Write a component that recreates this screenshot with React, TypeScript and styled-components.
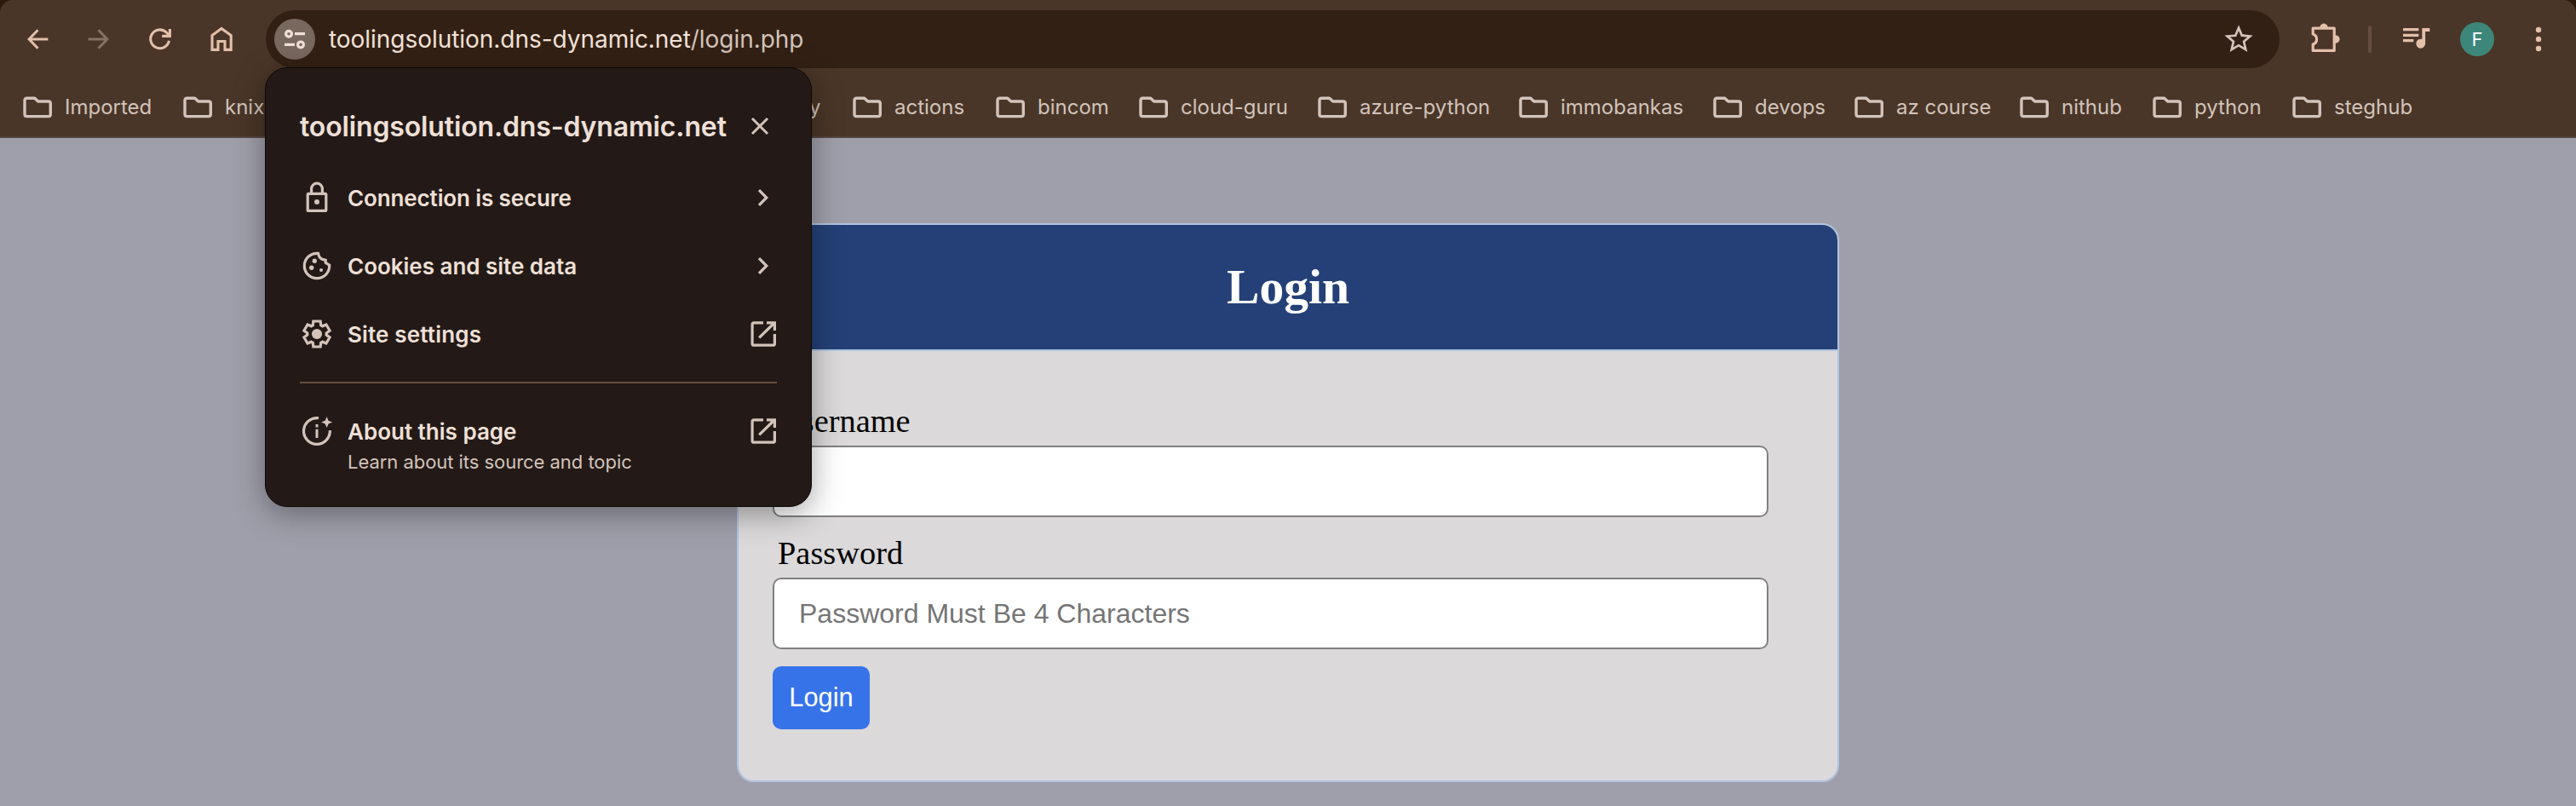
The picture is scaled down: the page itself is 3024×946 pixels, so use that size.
import React from 'react';
import styled, { createGlobalStyle } from 'styled-components';

const ui = `Inter, "Liberation Sans", sans-serif`;

const GlobalStyle = createGlobalStyle`
  *, *::before, *::after { box-sizing: border-box; }
  body { margin: 0; background: #9f9fab; overflow: hidden; }
  h1, h2, p { margin: 0; }
  button { border: 0; padding: 0; background: none; color: inherit; font: inherit; }
  svg { display: block; flex: none; }
`;

const Window = styled.div`
  display: flex;
  flex-direction: column;
  height: 946px;
`;

/* Browser chrome */

const ChromeFrame = styled.header`
  background: #2b190e;
  flex: none;
`;

const Chrome = styled.div`
  height: 162px;
  background: #4a3628;
  border-bottom: 2px solid #57453c;
  border-radius: 15px 15px 0 0;
  font-family: ${ui};
`;

const Toolbar = styled.div`
  display: flex;
  align-items: center;
  height: 92px;
  padding: 0 24px 0 8px;
  color: #e2c0aa;
`;

const NavButton = styled.button<{ $muted?: boolean }>`
  display: grid;
  place-items: center;
  width: 72px;
  height: 72px;
  color: ${(p) => (p.$muted ? '#867163' : '#e2c0aa')};
`;

const Omnibox = styled.div`
  display: flex;
  align-items: center;
  gap: 16px;
  flex: 1;
  height: 68px;
  margin-left: 16px;
  padding: 0 28px 0 10px;
  border-radius: 34px;
  background: #332014;
  color: #d2c3bb;
`;

const SiteChip = styled.button`
  width: 48px;
  height: 48px;
  border-radius: 50%;
  background: #79685e;
  color: #efe0d7;
`;

const Url = styled.div`
  flex: 1;
  font-size: 28px;
  letter-spacing: -0.04px;
  white-space: nowrap;
  color: #d2c3bb;
`;

const Host = styled.span`
  color: #f1e2d9;
`;

const Actions = styled.div`
  display: flex;
  align-items: center;
  gap: 32px;
  margin-left: 32px;
`;

const Separator = styled.span`
  width: 4px;
  height: 32px;
  border-radius: 2px;
  background: #674d40;
`;

const Avatar = styled.span`
  display: grid;
  place-items: center;
  width: 40px;
  height: 40px;
  border-radius: 50%;
  background: #3c877a;
  color: #fff;
  font-size: 22px;
`;

const Bookmarks = styled.nav`
  display: flex;
  align-items: center;
  height: 68px;
  padding-left: 27px;
  color: #d2c3bb;
`;

const Bookmark = styled.div<{ $width: number }>`
  display: flex;
  align-items: center;
  gap: 15px;
  flex: none;
  width: ${(p) => p.$width}px;
  font-size: 24px;
  white-space: nowrap;
`;

const BookmarkName = styled.span`
  padding-bottom: 2px;
`;

/* Site information popup */

const Popup = styled.aside`
  position: absolute;
  left: 311px;
  top: 79px;
  width: 642px;
  height: 516px;
  padding: 32px 40px 0 40px;
  border: 1px solid #0d0908;
  border-radius: 26px;
  background: #231a17;
  box-shadow: 0 8px 36px rgba(0, 0, 0, 0.36);
  color: #efe0d7;
  font-family: ${ui};
`;

const PopupHead = styled.div`
  display: flex;
  align-items: center;
  justify-content: space-between;
  height: 72px;
  margin-bottom: 8px;
`;

const PopupTitle = styled.h2`
  font-size: 32px;
  font-weight: 600;
  letter-spacing: -0.14px;
  white-space: nowrap;
`;

const CloseButton = styled.button`
  color: #d2c3bb;
`;

const PopupRow = styled.div`
  display: flex;
  align-items: center;
  gap: 16px;
  height: 80px;
  color: #d2c3bb;
`;

const AboutRow = styled(PopupRow)`
  align-items: flex-start;
  margin-top: 38px;
`;

const IconSlot = styled.span`
  display: flex;
  align-items: center;
  height: 36px;
`;

const RowText = styled.div`
  flex: 1;
  padding-top: 1px;
  white-space: nowrap;
`;

const RowLabel = styled.p<{ $spacing?: number }>`
  font-size: 26px;
  font-weight: 600;
  line-height: 36px;
  letter-spacing: ${(p) => p.$spacing ?? 0}px;
  color: #efe0d7;
`;

const RowNote = styled.p`
  font-size: 22px;
  line-height: 35px;
  letter-spacing: -0.04px;
`;

const Divider = styled.hr`
  height: 2px;
  margin: 16px 0 0;
  border: 0;
  background: #674d40;
`;

/* Login page */

const Page = styled.main`
  display: flex;
  flex: 1;
  justify-content: center;
  align-items: flex-start;
  padding-top: 100px;
  background: #9f9fab;
`;

const Card = styled.form`
  width: 1294px;
  height: 656px;
  border: 2px solid #b0c4de;
  border-radius: 20px;
  background: #dbd9da;
  overflow: hidden;
`;

const CardHeader = styled.div`
  display: grid;
  place-items: center;
  height: 148px;
  padding-bottom: 2px;
  border-bottom: 2px solid #b0c4de;
  background: #244077;
`;

const CardTitle = styled.h1`
  font: bold 57.6px "Liberation Serif", serif;
  color: #fff;
`;

const CardBody = styled.div`
  display: flex;
  flex-direction: column;
  align-items: flex-start;
  padding: 40px;
`;

const Label = styled.label`
  margin: 20px 0 7px 6px;
  font: 38.4px/44px "Liberation Serif", serif;
  color: #000;
`;

const Input = styled.input`
  width: 1169px;
  height: 84px;
  padding: 0 29px;
  border: 2px solid #808080;
  border-radius: 10px;
  background: #fff;
  font: 32px "Liberation Sans", sans-serif;
  &::placeholder { color: #757575; opacity: 1; }
`;

const Submit = styled.button`
  width: 114px;
  height: 74px;
  margin-top: 20px;
  border-radius: 10px;
  background: #3673e9;
  color: #fff;
  font: 30.8px "Liberation Sans", sans-serif;
`;

/* Icons */

type IconProps = { size?: number; children: React.ReactNode };

const LineIcon = ({ size = 40, children }: IconProps) => (
  <svg width={size} height={size} viewBox={`0 0 ${size} ${size}`} fill="none" stroke="currentColor" strokeWidth="3.2">
    {children}
  </svg>
);

const BackIcon = () => (
  <LineIcon><path strokeWidth="3" d="M32.4 20H10.5M20.5 9.3L10.1 20l10.4 10.7" /></LineIcon>
);
const ForwardIcon = () => (
  <LineIcon><path strokeWidth="3" d="M7.6 20h21.9M19.5 9.3L29.9 20l-10.4 10.7" /></LineIcon>
);
const ReloadIcon = () => (
  <LineIcon><path strokeWidth="3.1" d="M30.4 21.7A10.9 10.9 0 1 1 27.3 12L31 15.8M31.4 8v8.4h-9.2" /></LineIcon>
);
const HomeIcon = () => (
  <LineIcon><path strokeWidth="3.1" d="M9 32.4V15.6L20 7.4l11.2 8.2v16.8H24v-9.9h-8v9.9z" /></LineIcon>
);
const TuneIcon = () => (
  <LineIcon size={48}>
    <circle cx="17" cy="17.7" r="3.4" />
    <circle cx="31" cy="30.4" r="3.4" />
    <path d="M24 17.6h12M12 30.4h12" />
  </LineIcon>
);
const StarIcon = () => (
  <svg width="40" height="40" viewBox="0 0 24 24" fill="currentColor">
    <path d="M22 9.24l-7.19-.62L12 2 9.19 8.63 2 9.24l5.46 4.73L5.82 21 12 17.27 18.18 21l-1.63-7.03L22 9.24zM12 15.4l-3.76 2.27 1-4.28-3.32-2.88 4.38-.38L12 6.1l1.71 4.04 4.38.38-3.32 2.88 1 4.28L12 15.4z" />
  </svg>
);
const PuzzleIcon = () => (
  <LineIcon>
    <path strokeLinejoin="round" d="M7.2 7.2h25v26.2h-25V26a6.3 6.3 0 0 0 0-12z" />
    <path stroke="none" fill="currentColor" d="M15.2 7a4.8 5.6 0 0 1 9.6 0zM33 15.2a5.6 4.8 0 0 1 0 9.6z" />
  </LineIcon>
);
const QueueIcon = () => (
  <LineIcon>
    <path d="M5 8.6h18.3M5 15.3h18.3M5 21.6h12.3" />
    <path fill="currentColor" stroke="none" d="M27.3 7h9v4h-5.2v14.3a5.4 5.4 0 1 1-3.8-5.2z" />
  </LineIcon>
);
const MenuIcon = () => (
  <LineIcon>
    <g fill="currentColor" stroke="none">
      <circle cx="20" cy="9" r="3.2" />
      <circle cx="20" cy="20" r="3.2" />
      <circle cx="20" cy="31" r="3.2" />
    </g>
  </LineIcon>
);
const FolderIcon = () => (
  <svg width="34" height="26" viewBox="0 0 34 26" fill="none" stroke="currentColor" strokeWidth="3.4" strokeLinejoin="round">
    <path d="M4.4 2.3h9.3l4 3.7h12.2q2.4 0 2.4 2.4v12.8q0 2.4-2.4 2.4H4.4q-2.4 0-2.4-2.4V4.7q0-2.4 2.4-2.4z" />
  </svg>
);
const CloseIcon = () => (
  <LineIcon><path strokeWidth="3" d="M11 11l18 18M29 11L11 29" /></LineIcon>
);
const ChevronIcon = () => (
  <LineIcon size={32}><path d="M11 7.2l8.8 8.8-8.8 8.8" /></LineIcon>
);
const ExternalIcon = () => (
  <LineIcon size={32}>
    <path d="M16 2.8H5.1q-2 0-2 2v22.6q0 1.8 2 1.8h22.3q2 0 2-1.8V16M20 2.8h9.4V12M11.2 20.4L29 3" />
  </LineIcon>
);
const LockIcon = () => (
  <LineIcon>
    <rect x="9.2" y="15.4" width="21.6" height="20" rx="1" />
    <path d="M13.6 15V9.6a6.4 6.4 0 0 1 12.8 0V15" />
    <circle cx="20" cy="25" r="3" fill="currentColor" stroke="none" />
  </LineIcon>
);
const CookieIcon = () => (
  <LineIcon>
    <path d="M21.6 5.4A14.7 14.7 0 1 0 34.7 19.2L30.2 16.4V13.2L26.5 12.4C24 11.4 22 9 21.6 5.4z" />
    <g fill="currentColor" stroke="none">
      <circle cx="17.3" cy="14.3" r="2.7" />
      <circle cx="13.7" cy="22.3" r="2.7" />
      <circle cx="25" cy="25" r="2" />
    </g>
  </LineIcon>
);
const GearIcon = () => (
  <svg width="40" height="40" viewBox="0 -960 960 960" fill="none" stroke="currentColor" strokeWidth="86">
    <path transform="translate(48 -48) scale(0.9)" d="M370-80l-16-128q-13-5-24.5-12T307-235l-119 50L78-375l103-78q-1-7-1-13.5v-27q0-6.5 1-13.5L78-585l110-190 119 50q11-8 23-15t24-12l16-128h220l16 128q13 5 24.5 12t22.5 15l119-50 110 190-103 78q1 7 1 13.5v27q0 6.5-2 13.5l103 78-110 190-118-50q-11 8-23 15t-24 12L590-80H370Z" />
    <circle cx="480" cy="-480" r="146" fill="currentColor" stroke="none" />
  </svg>
);
const AboutIcon = () => (
  <LineIcon>
    <path d="M22 4.7A15.4 15.4 0 1 0 35.3 19.2" />
    <path strokeWidth="3" d="M20 12v3.4M20 17.8V28" />
    <path fill="currentColor" stroke="none" d="M31.6 3l1.9 4.7 4.6 1.8-4.6 1.9-1.9 4.7-1.9-4.7-4.6-1.9 4.6-1.8z" />
  </LineIcon>
);

const bookmarks = [
  { name: 'Imported', width: 188 },
  { name: 'knixa', width: 686 },
  { name: 'y', width: 100 },
  { name: 'actions', width: 168 },
  { name: 'bincom', width: 168 },
  { name: 'cloud-guru', width: 210 },
  { name: 'azure-python', width: 236 },
  { name: 'immobankas', width: 228 },
  { name: 'devops', width: 166 },
  { name: 'az course', width: 194 },
  { name: 'nithub', width: 156 },
  { name: 'python', width: 164 },
  { name: 'steghub', width: 200 },
];

const siteRows = [
  { label: 'Connection is secure', icon: <LockIcon />, end: <ChevronIcon />, spacing: -0.12 },
  { label: 'Cookies and site data', icon: <CookieIcon />, end: <ChevronIcon />, spacing: -0.02 },
  { label: 'Site settings', icon: <GearIcon />, end: <ExternalIcon />, spacing: 0.16 },
];

export default function App() {
  return (
    <Window>
      <GlobalStyle />
      <ChromeFrame>
        <Chrome>
          <Toolbar>
            <NavButton><BackIcon /></NavButton>
            <NavButton $muted><ForwardIcon /></NavButton>
            <NavButton><ReloadIcon /></NavButton>
            <NavButton><HomeIcon /></NavButton>
            <Omnibox>
              <SiteChip><TuneIcon /></SiteChip>
              <Url><Host>toolingsolution.dns-dynamic.net</Host>/login.php</Url>
              <StarIcon />
            </Omnibox>
            <Actions>
              <PuzzleIcon />
              <Separator />
              <QueueIcon />
              <Avatar>F</Avatar>
              <MenuIcon />
            </Actions>
          </Toolbar>
          <Bookmarks>
            {bookmarks.map((b) => (
              <Bookmark key={b.name} $width={b.width}>
                <FolderIcon />
                <BookmarkName>{b.name}</BookmarkName>
              </Bookmark>
            ))}
          </Bookmarks>
        </Chrome>
      </ChromeFrame>

      <Page>
        <Card>
          <CardHeader><CardTitle>Login</CardTitle></CardHeader>
          <CardBody>
            <Label htmlFor="username">Username</Label>
            <Input id="username" />
            <Label htmlFor="password">Password</Label>
            <Input id="password" type="password" placeholder="Password Must Be 4 Characters" />
            <Submit type="button">Login</Submit>
          </CardBody>
        </Card>
      </Page>

      <Popup>
        <PopupHead>
          <PopupTitle>toolingsolution.dns-dynamic.net</PopupTitle>
          <CloseButton><CloseIcon /></CloseButton>
        </PopupHead>
        {siteRows.map((row) => (
          <PopupRow key={row.label}>
            {row.icon}
            <RowText><RowLabel $spacing={row.spacing}>{row.label}</RowLabel></RowText>
            {row.end}
          </PopupRow>
        ))}
        <Divider />
        <AboutRow>
          <IconSlot><AboutIcon /></IconSlot>
          <RowText>
            <RowLabel $spacing={0}>About this page</RowLabel>
            <RowNote>Learn about its source and topic</RowNote>
          </RowText>
          <IconSlot><ExternalIcon /></IconSlot>
        </AboutRow>
      </Popup>
    </Window>
  );
}
